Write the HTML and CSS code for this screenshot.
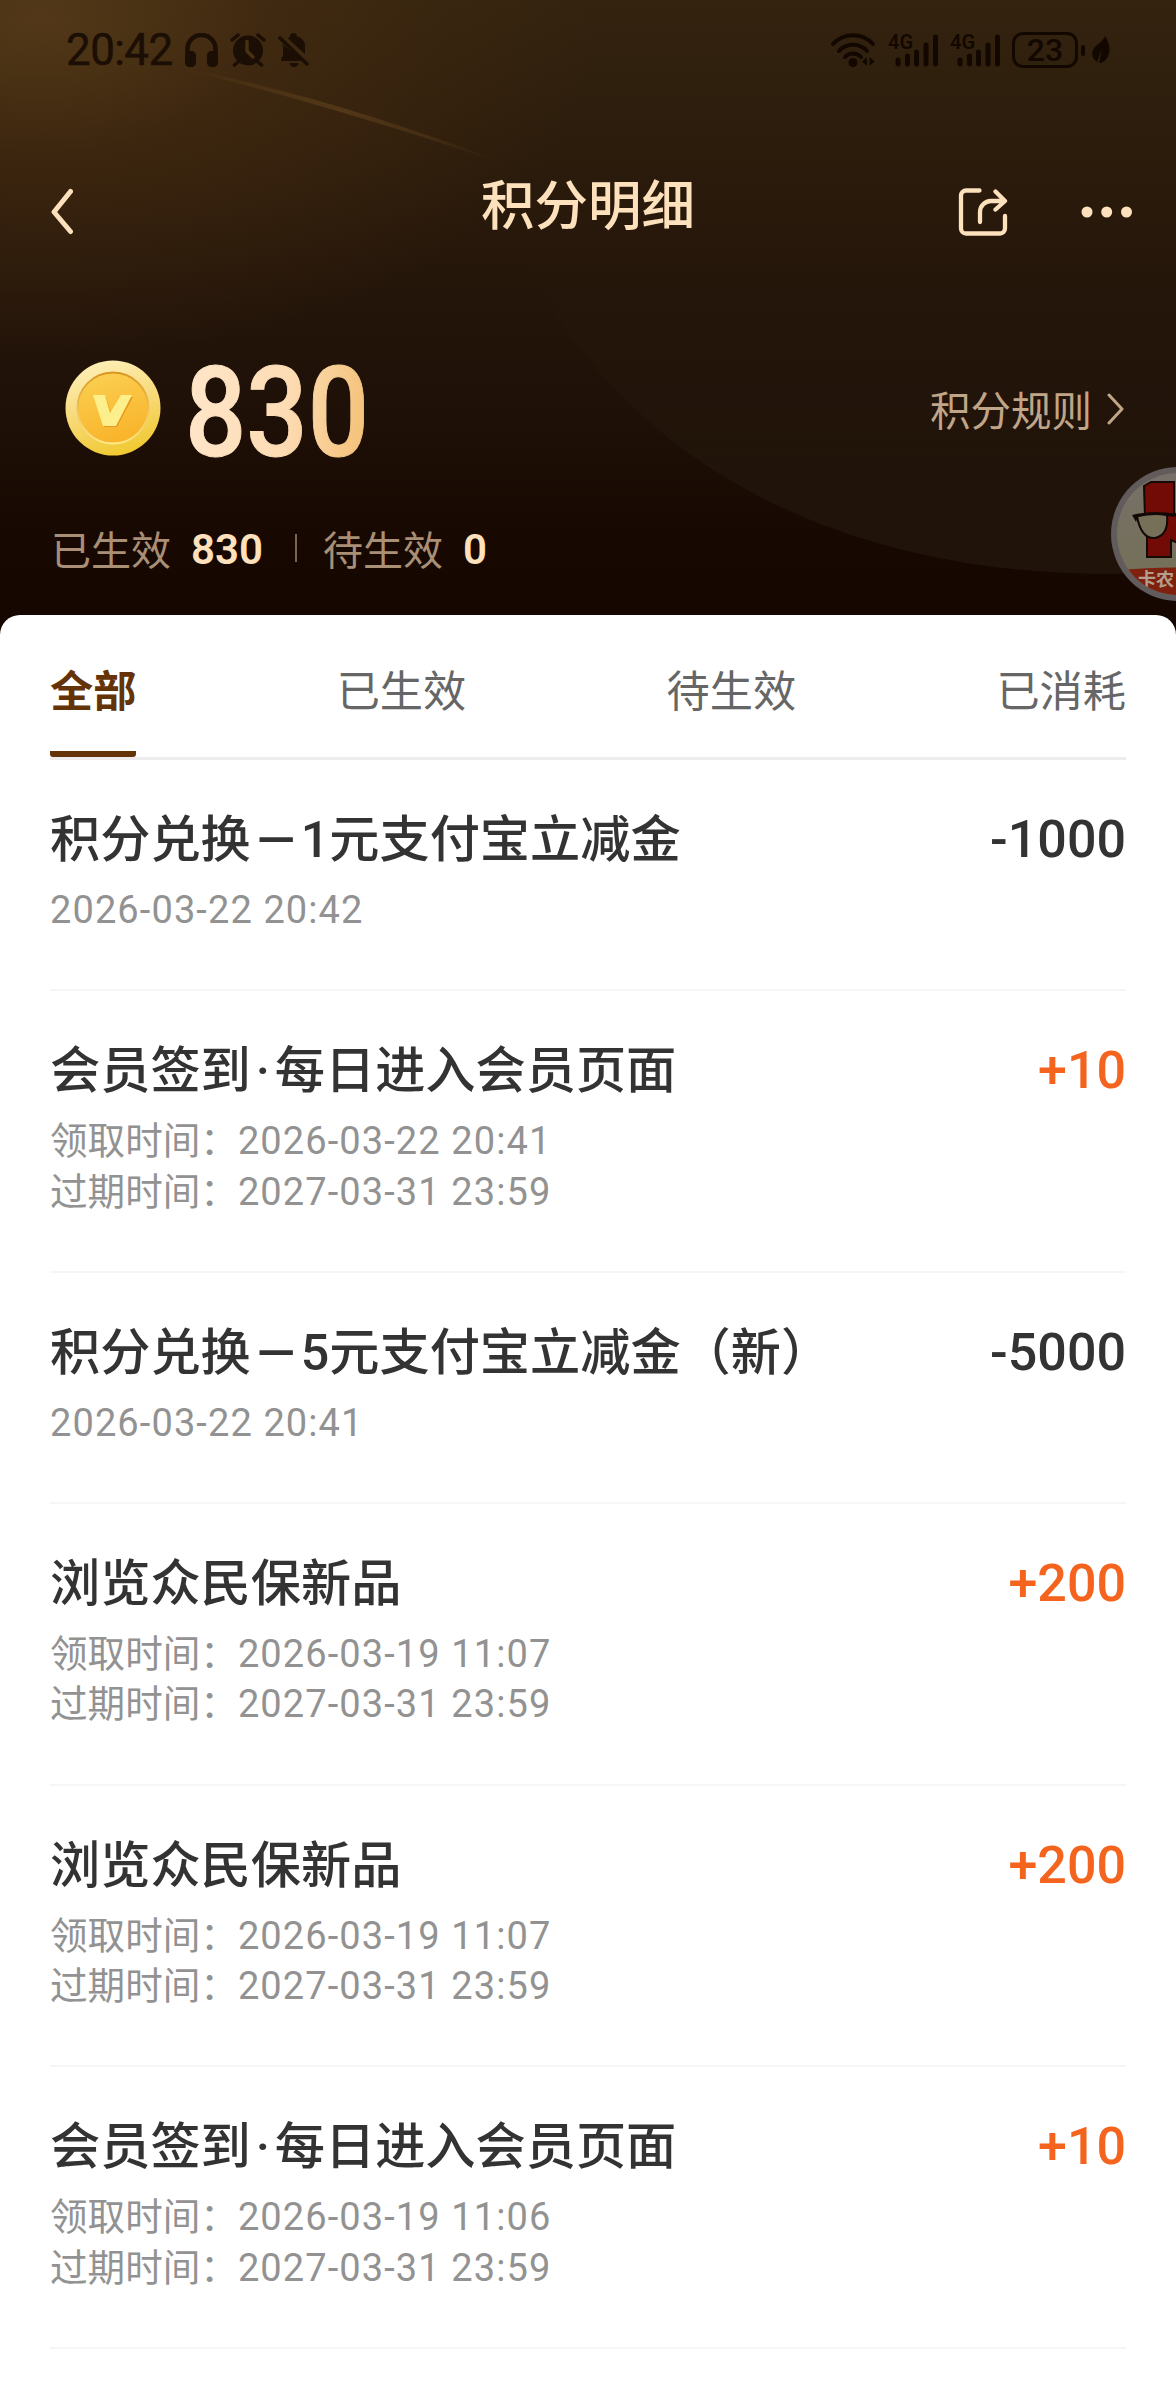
FILE: index.html
```html
<!DOCTYPE html>
<html lang="zh-CN">
<head>
    <meta charset="utf-8">
    <title>积分明细</title>
    <link rel="stylesheet" href="styles.css">
</head>
<body>

<div class="header">
    <svg class="header-bg" width="1176" height="640" viewBox="0 0 1176 640">
        <defs>
            <linearGradient id="arcFill" x1="0" y1="0" x2="0" y2="1">
                <stop offset="0.3" stop-color="#28190c" stop-opacity="0"/>
                <stop offset="0.75" stop-color="#22150a" stop-opacity="0.8"/>
                <stop offset="1" stop-color="#20130a"/>
            </linearGradient>
            <linearGradient id="rayFill" x1="0" y1="0" x2="1" y2="0">
                <stop offset="0" stop-color="#6b4a20" stop-opacity="0"/>
                <stop offset="0.5" stop-color="#6b4a20" stop-opacity="0.4"/>
                <stop offset="1" stop-color="#6b4a20" stop-opacity="0"/>
            </linearGradient>
        </defs>
        <path d="M500 200 C580 430 800 574 1110 574 L1176 572 L1176 100 Z" fill="url(#arcFill)"/>
        <path d="M180 68 Q330 98 500 162 Q330 104 180 68Z" fill="url(#rayFill)" stroke="url(#rayFill)" stroke-width="2"/>
    </svg>

    <div class="status">
        <div class="status-left">
            <span class="time">20:42</span>
            <svg width="33" height="34" viewBox="0 0 33 34">
                <path d="M2.5 25V16a14 14 0 0 1 28 0v9" fill="none" stroke="currentColor" stroke-width="4.5"/>
                <rect x="0" y="18" width="11" height="16" rx="4.5" fill="currentColor"/>
                <rect x="22" y="18" width="11" height="16" rx="4.5" fill="currentColor"/>
            </svg>
            <svg width="36" height="34" viewBox="0 0 36 34">
                <circle cx="18" cy="17.500" r="15" fill="currentColor"/>
                <path d="M2 7L8 2M34 7L28 2M8 29L4.500 32M28 29L31.500 32" stroke="currentColor" stroke-width="3.500" stroke-linecap="round"/>
                <path d="M17 8.500V18L23 24" fill="none" stroke="#49300f" stroke-width="3.500" stroke-linecap="round"/>
            </svg>
            <svg width="31" height="34" viewBox="0 0 31 34">
                <path d="M4 11L26 28H3V26L5 23V14ZM12 3.500a3.500 3.500 0 0 1 7 0a9.500 9.500 0 0 1 8 9.500V21L10 5.500Z" fill="currentColor"/>
                <path d="M11.500 30h9a4.500 4 0 0 1-9 0Z" fill="currentColor"/>
                <path d="M2 5L29 31" stroke="currentColor" stroke-width="3.500" stroke-linecap="round"/>
            </svg>
        </div>
        <div class="status-right">
            <svg width="45" height="36" viewBox="0 0 45 36">
                <g fill="none" stroke="currentColor" stroke-width="4" stroke-linecap="round">
                    <path d="M2 12a27 27 0 0 1 40 0"/>
                    <path d="M8 19a19 19 0 0 1 28 0"/>
                    <path d="M14 25a11 11 0 0 1 16 0"/>
                </g>
                <circle cx="22" cy="30.500" r="4.500" fill="currentColor"/>
                <path d="M36 25v9l-5-4.500ZM38.500 25v9l5-4.500Z" fill="currentColor"/>
            </svg>
            <svg class="signal" width="50" height="36" viewBox="0 0 50 36">
                <text x="0" y="17" class="net">4G</text>
                <path d="M10 28v4M19.500 24v8M28.500 20v12M38 13v19M47.500 5v27" stroke="currentColor" stroke-width="5" stroke-linecap="round"/>
            </svg>
            <svg class="signal" width="50" height="36" viewBox="0 0 50 36">
                <text x="0" y="17" class="net">4G</text>
                <path d="M10 28v4M19.500 24v8M28.500 20v12M38 13v19M47.500 5v27" stroke="currentColor" stroke-width="5" stroke-linecap="round"/>
            </svg>
            <div class="battery">23</div>
            <div class="battery-tip"></div>
            <svg class="leaf" width="18" height="28" viewBox="0 0 18 28">
                <path d="M13 0C17 6 19 14 16 20C14 25 10 27 7 27L10 13L5 26C-1 22-1 15 3 11C6 8 11 5 13 0Z" fill="currentColor"/>
            </svg>
        </div>
    </div>

    <div class="nav">
        <svg class="back" width="24" height="48" viewBox="0 0 24 48">
            <path d="M21.500 3.500L5 24L21.500 43.500" fill="none" stroke="currentColor" stroke-width="5" stroke-linecap="round" stroke-linejoin="round"/>
        </svg>
        <h1>积分明细</h1>
        <div class="nav-actions">
            <svg width="50" height="50" viewBox="0 0 50 50">
                <g fill="none" stroke="currentColor" stroke-width="4.300" stroke-linecap="round" stroke-linejoin="round">
                    <path d="M21.500 3.500H8A5 5 0 0 0 3 8.500V41.500A5 5 0 0 0 8 46.500H42A5 5 0 0 0 47 41.500V29"/>
                    <path d="M22 35V25A11 11 0 0 1 33 14H46M37.500 4.500L47 14L37.500 22.500"/>
                </g>
            </svg>
            <svg width="52" height="12" viewBox="0 0 52 12">
                <g fill="currentColor">
                    <circle cx="6" cy="6" r="5.500"/>
                    <circle cx="25.700" cy="6" r="5.500"/>
                    <circle cx="45.500" cy="6" r="5.500"/>
                </g>
            </svg>
        </div>
    </div>

    <div class="balance">
        <svg class="coin" width="96" height="96" viewBox="0 0 96 96">
            <defs>
                <linearGradient id="coinRim" x1="0.300" y1="0" x2="0.600" y2="1">
                    <stop offset="0" stop-color="#fdf0b8"/>
                    <stop offset="0.500" stop-color="#f8d978"/>
                    <stop offset="1" stop-color="#f0c92f"/>
                </linearGradient>
                <linearGradient id="coinFace" x1="0" y1="0" x2="0.300" y2="1">
                    <stop offset="0" stop-color="#fbd154"/>
                    <stop offset="1" stop-color="#f9b52c"/>
                </linearGradient>
                <linearGradient id="coinEdge" x1="0" y1="0" x2="0" y2="1">
                    <stop offset="0" stop-color="#d99422"/>
                    <stop offset="1" stop-color="#ffe98a"/>
                </linearGradient>
            </defs>
            <circle cx="48" cy="48" r="47.500" fill="url(#coinRim)"/>
            <circle cx="48" cy="48" r="35.500" fill="url(#coinFace)" stroke="url(#coinEdge)" stroke-width="1.800"/>
            <path d="M30 37H41L46 54L57 37H68L52 67H39Z" fill="#e79a1e"/>
            <path d="M28 35H40L45 53L56 35H67L51 66H38Z" fill="#fdf08c"/>
        </svg>
        <svg class="total" width="200" height="168" viewBox="0 0 200 168">
            <defs>
                <linearGradient id="gold" gradientUnits="userSpaceOnUse" x1="6" y1="0" x2="182" y2="20">
                    <stop offset="0" stop-color="#ffe6ca"/>
                    <stop offset="0.600" stop-color="#fddcb4"/>
                    <stop offset="1" stop-color="#f5c580"/>
                </linearGradient>
            </defs>
            <text x="2" y="132" textLength="184" lengthAdjust="spacingAndGlyphs" fill="url(#gold)">830</text>
        </svg>
        <div class="rules">
            <span>积分规则</span>
            <svg width="20" height="34" viewBox="0 0 20 34">
                <path d="M3 4L16 18L3 32" fill="none" stroke="currentColor" stroke-width="3" stroke-linecap="round" stroke-linejoin="round"/>
            </svg>
        </div>
    </div>

    <div class="summary">
        <span>已生效</span>
        <b>830</b>
        <i class="bar"></i>
        <span>待生效</span>
        <b>0</b>
    </div>

    <div class="float-badge">
        <svg width="134" height="134" viewBox="0 0 134 134">
            <defs>
                <clipPath id="face"><circle cx="67" cy="67" r="61"/></clipPath>
                <linearGradient id="faceFill" x1="0" y1="0" x2="0" y2="1">
                    <stop offset="0" stop-color="#777069"/>
                    <stop offset="1" stop-color="#747055"/>
                </linearGradient>
            </defs>
            <circle cx="67" cy="67" r="67" fill="#625b5b"/>
            <circle cx="67" cy="67" r="61" fill="url(#faceFill)"/>
            <g clip-path="url(#face)">
                <path d="M33 19L40 15H63V46L67 50V76L60 73V90H36V71L34 50Z" fill="#720a05" stroke="#160804" stroke-width="2"/>
                <path d="M26 49Q42 44 56 48Q58 68 44 71Q30 72 26 49Z" fill="#777058" stroke="#120906" stroke-width="2"/>
                <path d="M21 48Q40 43 67 47L63 50Q45 46 27 50L25 55Z" fill="#120906"/>
                <path d="M10 103Q60 98 134 103V134H10Z" fill="#80200f"/>
                <text x="27" y="119" class="badge-text">卡农</text>
            </g>
        </svg>
    </div>
</div>

<div class="sheet">
    <div class="tabs">
        <div class="tab active">全部</div>
        <div class="tab">已生效</div>
        <div class="tab">待生效</div>
        <div class="tab">已消耗</div>
    </div>

    <div class="list">
        <div class="item">
            <div>
                <div class="title">积分兑换<span class="dash">—</span>1元支付宝立减金</div>
                <div class="date">2026-03-22 20:42</div>
            </div>
            <div class="amount">-1000</div>
        </div>
        <div class="item">
            <div>
                <div class="title">会员签到<span class="dot">·</span>每日进入会员页面</div>
                <div class="date"><span>领取时间：</span>2026-03-22 20:41</div>
                <div class="date"><span>过期时间：</span>2027-03-31 23:59</div>
            </div>
            <div class="amount plus">+10</div>
        </div>
        <div class="item">
            <div>
                <div class="title">积分兑换<span class="dash">—</span>5元支付宝立减金（新）</div>
                <div class="date">2026-03-22 20:41</div>
            </div>
            <div class="amount">-5000</div>
        </div>
        <div class="item">
            <div>
                <div class="title">浏览众民保新品</div>
                <div class="date"><span>领取时间：</span>2026-03-19 11:07</div>
                <div class="date"><span>过期时间：</span>2027-03-31 23:59</div>
            </div>
            <div class="amount plus">+200</div>
        </div>
        <div class="item">
            <div>
                <div class="title">浏览众民保新品</div>
                <div class="date"><span>领取时间：</span>2026-03-19 11:07</div>
                <div class="date"><span>过期时间：</span>2027-03-31 23:59</div>
            </div>
            <div class="amount plus">+200</div>
        </div>
        <div class="item">
            <div>
                <div class="title">会员签到<span class="dot">·</span>每日进入会员页面</div>
                <div class="date"><span>领取时间：</span>2026-03-19 11:06</div>
                <div class="date"><span>过期时间：</span>2027-03-31 23:59</div>
            </div>
            <div class="amount plus">+10</div>
        </div>
    </div>
</div>

</body>
</html>
```
FILE: styles.css
```css
* {
    box-sizing: border-box;
}

body {
    margin: 0;
    width: 1176px;
    height: 2400px;
    overflow: hidden;
    background: #fff;
    font-family: Roboto, "Noto Sans CJK SC", sans-serif;
}

svg {
    display: block;
    flex: none;
}

/* header */
.header {
    position: relative;
    height: 640px;
    overflow: hidden;
    color: #fde0bc;
    background:
        radial-gradient(ellipse 560px 340px at 40px 20px, rgba(96, 66, 28, 0.7), rgba(80, 50, 18, 0.45) 40%, rgba(60, 36, 12, 0) 100%),
        linear-gradient(#33230f 0, #2c1c0c 150px, #24150a 300px, #1e1007 420px, #170801 540px, #150600 100%);
}

.header-bg {
    position: absolute;
    left: 0;
    top: 0;
}

.status,
.nav,
.balance,
.summary {
    position: relative;
    display: flex;
    align-items: center;
}

.status {
    height: 100px;
    padding: 0 66px;
    justify-content: space-between;
    color: #1b0e04;
}

.status-left,
.status-right {
    display: flex;
    align-items: center;
}

.status-left {
    gap: 12px;
}

.status-right {
    color: #120800;
}

.time {
    width: 107px;
    font-size: 44px;
    letter-spacing: -0.6px;
    white-space: nowrap;
    -webkit-text-stroke: 0.5px currentColor;
}

.signal {
    margin-left: 12px;
    overflow: visible;
}

.net {
    font-size: 20px;
    font-weight: 600;
    fill: currentColor;
}

.battery {
    width: 66px;
    height: 36px;
    margin-left: 12px;
    border: 3px solid;
    border-radius: 11px;
    font-size: 32px;
    font-weight: 500;
    line-height: 31px;
    text-align: center;
}

.battery-tip {
    width: 4px;
    height: 11px;
    margin: 0 7px 0 3px;
    border-radius: 2px;
    background: currentColor;
}

.nav {
    display: grid;
    grid-template-columns: 1fr auto 1fr;
    height: 224px;
    padding: 0 43px 0 43px;
}

.nav h1 {
    margin: 0 0 22px;
    font-size: 53.5px;
    font-weight: 500;
}

.back {
    margin-left: 6px;
}

.nav-actions {
    display: flex;
    align-items: center;
    justify-content: flex-end;
    gap: 73px;
}

.balance {
    height: 168px;
    padding: 0 50px 0 65px;
}

.total {
    margin-left: 22px;
    overflow: visible;
}

.total text {
    font-size: 126px;
    font-weight: 500;
    stroke: url(#gold);
    stroke-width: 1px;
}

.rules {
    display: flex;
    align-items: center;
    gap: 14px;
    margin-left: auto;
    color: #c0a588;
    font-size: 40.5px;
}

.summary {
    height: 116px;
    padding: 0 50px 4px 51px;
    font-size: 40px;
}

.summary span {
    color: #a98f76;
}

.summary b {
    margin: 2px 0 0 20px;
    font-size: 42px;
    font-weight: 600;
}

.bar {
    width: 2px;
    height: 28px;
    margin: 0 26px 0 32px;
    background: #7a6551;
}

.float-badge {
    position: absolute;
    left: 1111px;
    top: 467px;
}

.badge-text {
    font-size: 18px;
    font-weight: 700;
    fill: #b0a08c;
}

/* white sheet */
.sheet {
    position: relative;
    height: 1785px;
    margin-top: -25px;
    padding: 0 50px;
    border-radius: 20px 20px 0 0;
    background: #fff;
}

.tabs {
    display: flex;
    justify-content: space-between;
    height: 145px;
    border-bottom: 3px solid #ededed;
}

.tab {
    height: 142px;
    color: #666;
    font-size: 43.2px;
    line-height: 155px;
}

.tab.active {
    border-bottom: 6px solid #653308;
    border-radius: 3px;
    color: #653308;
    font-weight: 700;
}

.item {
    display: flex;
    justify-content: space-between;
    padding: 44px 0 53.5px;
    border-bottom: 2px solid #f6f6f6;
    color: #333;
}

.title,
.amount {
    height: 81px;
    font-size: 50.2px;
    font-weight: 500;
    line-height: 72px;
    white-space: nowrap;
}

.amount {
    font-size: 52px;
}

.dash,
.dot {
    display: inline-block;
    width: 50px;
    text-align: center;
}

.dot {
    width: 24px;
}

.date {
    color: #929292;
    font-size: 38px;
    line-height: 50.6px;
    letter-spacing: 1.1px;
    white-space: nowrap;
}

.date span {
    font-size: 37.6px;
    letter-spacing: 0;
}

.amount.plus {
    color: #f4641e;
}
```
